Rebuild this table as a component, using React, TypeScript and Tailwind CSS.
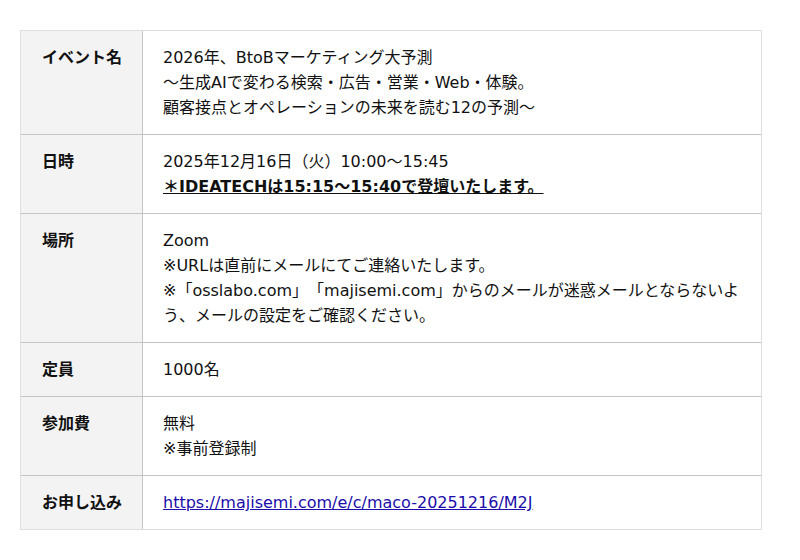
import React from "react";

const font = { fontFamily: '"DejaVu Sans", "Noto Sans CJK JP", sans-serif' };

function Row({ label, children, last }: { label: string; children: React.ReactNode; last?: boolean }) {
  return (
    <div className={`flex ${last ? "" : "border-b border-[#c4c4c4]"}`}>
      <div className="w-[122px] shrink-0 bg-[#f3f3f3] border-r border-[#c4c4c4] pl-[21px] pr-2 py-[14px] font-bold text-[16px] leading-[25px] text-[#111]">
        {label}
      </div>
      <div className="flex-1 pl-[20px] pr-4 py-[14px] text-[16px] leading-[25px] text-[#111]">{children}</div>
    </div>
  );
}

export default function App() {
  return (
    <div className="w-[800px] h-[560px] bg-white pt-[30px] pl-[20px] [text-spacing-trim:space-all]" style={font}>
      <div className="w-[742px] border border-[#dedede]">
        <Row label="イベント名">
          <div>2026年、BtoBマーケティング大予測</div>
          <div>～生成AIで変わる検索・広告・営業・Web・体験。</div>
          <div>顧客接点とオペレーションの未来を読む12の予測～</div>
        </Row>
        <Row label="日時">
          <div>2025年12月16日（火）10:00～15:45</div>
          <div>
            <span className="font-bold underline">＊IDEATECHは15:15～15:40で登壇いたします。 </span>
          </div>
        </Row>
        <Row label="場所">
          <div>Zoom</div>
          <div>※URLは直前にメールにてご連絡いたします。</div>
          <div>※「osslabo.com」「majisemi.com」からのメールが迷惑メールとならないよう、メールの設定をご確認ください。</div>
        </Row>
        <Row label="定員">
          <div>1000名</div>
        </Row>
        <Row label="参加費">
          <div>無料</div>
          <div>※事前登録制</div>
        </Row>
        <Row label="お申し込み" last>
          <a href="#" className="text-[#1a0dab] underline">https://majisemi.com/e/c/maco-20251216/M2J</a>
        </Row>
      </div>
    </div>
  );
}
